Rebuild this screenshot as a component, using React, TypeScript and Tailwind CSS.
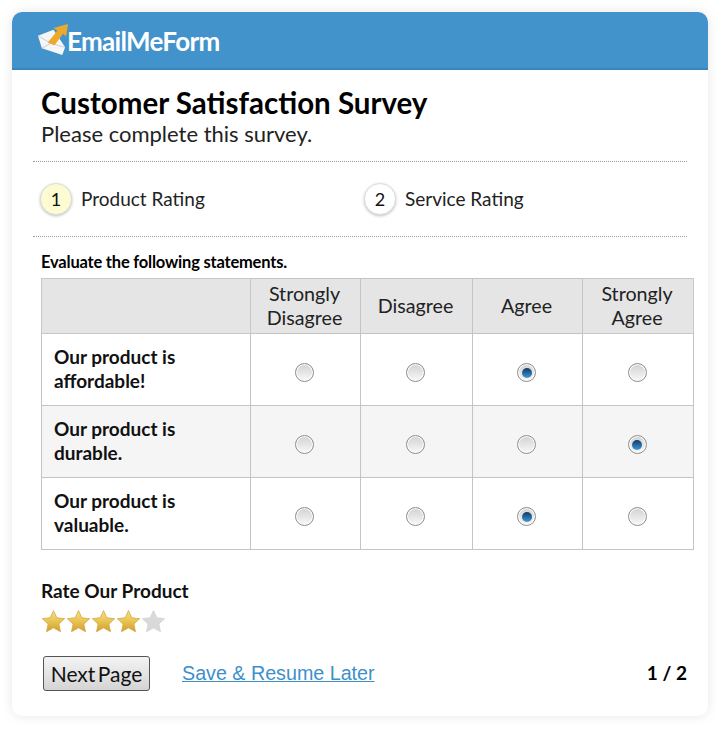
const rows = [
  { label: ['Our product is', 'affordable!'], picked: 2, bg: 'bg-white' },
  { label: ['Our product is', 'durable.'], picked: 3, bg: 'bg-[#f5f5f5]' },
  { label: ['Our product is', 'valuable.'], picked: 2, bg: 'bg-white' },
]

const Radio = ({ on }: { on: boolean }) => (
  <span className="mx-auto flex h-[19px] w-[19px] items-center justify-center rounded-full border border-[#8f8f8f] bg-gradient-to-b from-[#d2d2d2] to-[#f8f8f8] shadow-[inset_0_0_0_1px_#fff]">
    {on && (
      <span className="h-[10px] w-[10px] rounded-full bg-gradient-to-b from-[#123c66] to-[#3f9bd8]" />
    )}
  </span>
)

const Star = ({ on }: { on: boolean }) => (
  <svg viewBox="0 0 24 24" className="h-[25px] w-[25px]">
    <defs>
      <linearGradient id="gold" x1="0" y1="0" x2="0" y2="1">
        <stop offset="0" stopColor="#f5e08a" />
        <stop offset="0.55" stopColor="#e6c14f" />
        <stop offset="1" stopColor="#d19c2e" />
      </linearGradient>
    </defs>
    <path
      d="M12 1.5l3.2 6.9 7.5.9-5.5 5.1 1.5 7.4L12 18.1l-6.7 3.7 1.5-7.4L1.3 9.3l7.5-.9z"
      fill={on ? 'url(#gold)' : '#d9d9d9'}
      stroke={on ? '#d6ab45' : '#d4d4d4'}
      strokeWidth="0.8"
      strokeLinejoin="round"
    />
  </svg>
)

const Logo = () => (
  <svg viewBox="0 0 34 34" className="h-[33px] w-[33px]">
    <path d="M1 12 L17 6 L29 24 L26 32 L5 25 Z" fill="#f4f6f8" />
    <path d="M1 12 L14 20 L29 24 M5 25 L14 20" fill="none" stroke="#b9c4cc" strokeWidth="0.8" />
    <path d="M11 19 L21 7 L17 4 L32 0 L30 13 L27 10 L18 22 Z" fill="#eda92b" />
  </svg>
)

const Step = ({ n, text, active }: { n: number; text: string; active?: boolean }) => (
  <div className="flex items-center gap-[9px]">
    <span
      className={`flex h-[32px] w-[32px] items-center justify-center rounded-full border border-[#ddd] text-[18px] text-[#111] shadow-[0_1px_3px_rgba(0,0,0,0.25)] ${
        active ? 'bg-[#fdfbd2]' : 'bg-white'
      }`}
    >
      {n}
    </span>
    <span className="text-[19px] text-[#222]">{text}</span>
  </div>
)

export default function App() {
  return (
    <div className="h-[732px] w-[723px] overflow-hidden bg-white pl-[12px] pt-[12px] font-['Lato',sans-serif] text-black">
      <div className="h-[704px] w-[696px] overflow-hidden rounded-[10px] bg-white shadow-[0_0_12px_rgba(0,0,0,0.10)]">
        <div className="flex h-[58px] items-center gap-0 border-b-2 border-[#3a85bd] bg-[#4292cb] pl-[25px]">
          <Logo />
          <span className="-ml-[3px] mt-[2px] text-[26px] font-bold tracking-[-0.7px] text-white">EmailMeForm</span>
        </div>

        <div className="px-[21px]">
          <div className="border-b border-dotted border-[#999] px-[8px] pb-[13px] pt-[16px]">
            <h1 className="text-[29.5px] font-bold leading-[34px]">Customer Satisfaction Survey</h1>
            <p className="text-[22px] leading-[28px] text-[#222]">Please complete this survey.</p>
          </div>
          <div className="flex h-[75px] items-center border-b border-dotted border-[#999] px-[7px]">
            <div className="w-[324px]">
              <Step n={1} text="Product Rating" active />
            </div>
            <Step n={2} text="Service Rating" />
          </div>
        </div>

        <div className="pl-[29px] pr-[14px]">
          <p className="mt-[15px] text-[16.5px] font-bold leading-[20px] tracking-[-0.2px]">Evaluate the following statements.</p>
          <table className="mt-[6px] w-[653px] table-fixed border-collapse">
            <thead>
              <tr className="h-[55px] bg-[#e5e5e5] text-[19.7px] font-normal leading-[24px] text-[#222]">
                <th className="w-[209px] border border-[#c8c8c8]" />
                <th className="w-[110px] border border-[#c4c4c4] pr-[2px] font-normal">Strongly Disagree</th>
                <th className="w-[112px] border border-[#c4c4c4] pr-[2px] font-normal">Disagree</th>
                <th className="w-[110px] border border-[#c4c4c4] pr-[2px] font-normal">Agree</th>
                <th className="border border-[#c8c8c8] pr-[2px] font-normal">Strongly Agree</th>
              </tr>
            </thead>
            <tbody>
              {rows.map((r) => (
                <tr key={r.label[1]} className={`h-[72px] ${r.bg}`}>
                  <td className="border border-[#c4c4c4] pb-[2px] pl-[12px] text-[19px] font-bold leading-[24px] text-[#111]">
                    {r.label[0]}
                    <br />
                    {r.label[1]}
                  </td>
                  {[0, 1, 2, 3].map((i) => (
                    <td key={i} className="border border-[#c4c4c4] pr-[2px] pt-[6px]">
                      <Radio on={i === r.picked} />
                    </td>
                  ))}
                </tr>
              ))}
            </tbody>
          </table>

          <p className="mt-[28px] text-[19px] font-bold leading-[26px] text-[#111]">Rate Our Product</p>
          <div className="mt-[5px] flex">
            {[1, 2, 3, 4, 5].map((i) => (
              <Star key={i} on={i < 5} />
            ))}
          </div>

          <div className="mt-[22px] flex items-center">
            <button className="ml-[2px] h-[35px] w-[107px] rounded-[3px] border border-[#555] bg-gradient-to-b from-[#f4f4f4] to-[#d4d4d4] text-[21px] text-[#111] [word-spacing:-3px]">
              Next Page
            </button>
            <a className="ml-[32px] mt-[1px] font-['Liberation_Sans',sans-serif] text-[19.7px] text-[#3d8fcb] underline">
              Save &amp; Resume Later
            </a>
            <span className="ml-auto mr-[7px] text-[19px] font-bold">1 / 2</span>
          </div>
        </div>
      </div>
    </div>
  )
}
